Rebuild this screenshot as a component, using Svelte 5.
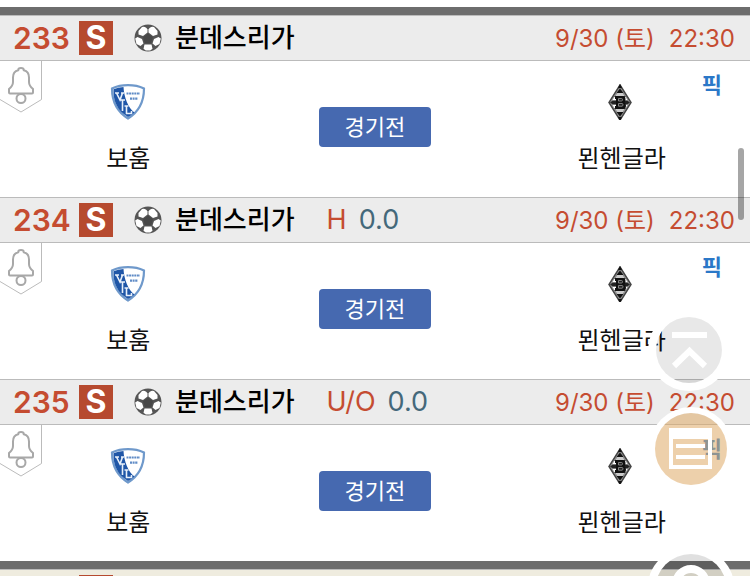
<script>
    let groups = [
        {
            tinted: false,
            games: [
                { no: 233, kind: "S", league: "분데스리가", type: "", line: "" },
                { no: 234, kind: "S", league: "분데스리가", type: "H", line: "0.0" },
                { no: 235, kind: "S", league: "분데스리가", type: "U/O", line: "0.0" }
            ]
        },
        {
            tinted: true,
            games: [{}]
        }
    ];

    function goTop() {
        window.scrollTo({ top: 0, behavior: "smooth" });
    }
</script>

<main>
    {#each groups as group}
        <section class:tinted={group.tinted}>
            {#each group.games as game}
                <article>
                    <header>
                        <span class="no">{game.no ?? ""}</span>
                        <span class="kind">{game.kind ?? ""}</span>
                        {#if game.league}
                            <svg class="ball" viewBox="0 0 28 28" aria-hidden="true">
                                <circle cx="14" cy="14" r="13.5" fill="#555" />
                                <g fill="#fff">
                                    <path d="M4.500 7 8 3q2-1 4.500 1l1 1.500v3L9 12l-4.500-1.500z" />
                                    <path d="M23.500 7 20 3q-2-1-4.500 1l-1 1.500v3L19 12l4.500-1.500z" />
                                    <path d="M1.200 14.500 3.500 13l4.500 2 1.500 4.500-3 2.500-4-2z" />
                                    <path d="M26.800 14.500 24.500 13l-4.500 2-1.500 4.500 3 2.500 4-2z" />
                                    <path d="M10.500 20.500h7l1 4.200-2.300 1.800h-4.400l-2.300-1.800z" />
                                </g>
                                <path d="M14 9.500l5 3.700-1.900 6h-6.200L9 13.200z" fill="#484848" />
                            </svg>
                            <h2>{game.league}</h2>
                            {#if game.type}
                                <span class="type">{game.type}</span>
                                <span class="line">{game.line}</span>
                            {/if}
                            <time><span>9/30 (토)</span><span>22:30</span></time>
                        {/if}
                    </header>

                    {#if game.league}
                        <div class="match">
                            <button class="alarm" aria-label="알림">
                                <svg viewBox="0 0 42 52" fill="none" stroke="#a8a8a8">
                                    <path d="M41.500 0v38.500L21 51 0 38.500" stroke="#bbb" />
                                    <path
                                        d="M9 31.500v-3.500c2.500-2 4-3.500 4-7v-4.500c0-4 2.200-6.500 5.200-7.200 0-1.600 1-2.300 2.800-2.300s2.800.7 2.800 2.300c3 .7 5.200 3.200 5.200 7.200v4.500c0 3.500 1.500 5 4 7v3.500q0 1-1 1H10q-1 0-1-1z"
                                        stroke-width="2"
                                    />
                                    <circle cx="21" cy="37.500" r="4.500" stroke-width="2" />
                                </svg>
                            </button>

                            <div class="team">
                                <svg class="crest" viewBox="0 0 36 36" aria-hidden="true">
                                    <path d="M2 4.500Q9 1.200 18 1.200T34 4.500C34 18 28.500 28 18 34.500 7.500 28 2 18 2 4.500z" fill="#fff" stroke="#6f99cb" stroke-width="2.200" />
                                    <path d="M3.500 5.300Q8 3.500 13.500 3C14 13 18 24 24.500 28.500q-3 3-6.500 4.500C8 27 3 18 3.500 5.300z" fill="#1f56a7" />
                                    <path d="M5 9h4M11 9h3M6.500 9l3.500 7 2.500-7M10 16h5M12.500 16v11M14.500 22h4M16.500 22v7.500h5v-2.500" fill="none" stroke="#e8f0fa" stroke-width="1.600" />
                                    <path d="M16.500 9.500h13.500M20 14.700h8" stroke="#5f8bc6" stroke-width="2.200" stroke-dasharray="2 .6" />
                                </svg>
                                <span>보훔</span>
                            </div>

                            <div class="state"><button class="before">경기전</button></div>

                            <div class="team">
                                <svg class="crest" viewBox="0 0 36 36" aria-hidden="true">
                                    <path d="M16 1 27 18.500 16 36 5 18.500z" fill="#aaa" stroke="#444" stroke-width="1.500" />
                                    <path d="M16 4 25 18.500 16 33 7 18.500z" fill="#ccc" stroke="#777" stroke-width=".8" />
                                    <path d="M16 0 18 4h-4zM16 37 18 33h-4zM16 4.500 19.500 9h-7zM16 32.500 19.500 28h-7z" fill="#111" />
                                    <path d="M11 12h10l2.500 4h-15zM11 25h10l2.500-4h-15z" fill="#fff" />
                                    <path d="M10.500 12.500h11M10.500 24.500h11" stroke="#333" />
                                    <path d="M6 18.500l3-2h14l3 2-3 2H9z" fill="#222" />
                                    <path d="M11 12h7.500q3 0 3 3.200 0 2.300-1.200 3.300 1.700 1 1.700 3.300 0 3.200-3.500 3.200H11v-3h1v-7h-1z" fill="#111" />
                                    <path d="M14.500 14.500h3q1 0 1 1.200t-1 1.300h-3zM14.500 19.500h3.500q1 0 1 1.300T18 22.200h-3.500z" fill="#222" stroke="#999" stroke-width=".8" />
                                </svg>
                                <span>묀헨글라</span>
                            </div>

                            <a class="pick" href="#pick">픽</a>
                        </div>
                    {/if}
                </article>
            {/each}
        </section>
    {/each}
</main>

<nav>
    <button class="round top" aria-label="맨 위로" on:click={goTop}>
        <svg viewBox="0 0 66 66" fill="none" stroke="#fff" stroke-width="6">
            <path d="M16 18h35M18 49l15.500-15L49 49" />
        </svg>
    </button>
    <button class="round slip" aria-label="목록">
        <svg viewBox="0 0 72 72" fill="#fff">
            <path d="M14 15h43v41H14zM18 26v26h35V26z" fill-rule="evenodd" />
            <path d="M21 31h29v4H21zM21 42h29v4H21z" />
        </svg>
    </button>
    <button class="round find" aria-label="검색">
        <svg viewBox="0 0 72 72" fill="none" stroke="#fff" stroke-width="8">
            <circle cx="36" cy="30" r="15" />
            <path d="M47 41l12 12" />
        </svg>
    </button>
</nav>

<div class="thumb"></div>

<style>
    :global(body) {
        background: #fff;
        overflow: hidden;
    }

    main {
        height: 100vh;
        overflow: hidden;
        padding-top: 7px;
        box-sizing: border-box;
        color: #111;
        font-family: Inter, "Noto Sans CJK KR", sans-serif;
    }

    section {
        border-top: 8px solid #6d6d6d;
    }

    header {
        display: flex;
        align-items: center;
        height: 46px;
        box-sizing: border-box;
        padding: 0 15px 0 13px;
        border-top: 1px solid #bbb;
        border-bottom: 1px solid #bbb;
        background: #ececec;
        line-height: 34px;
        white-space: nowrap;
    }

    .tinted header {
        background: #efecdf;
    }

    .no {
        width: 66px;
        color: #c54c31;
        font-size: 30px;
        font-weight: 600;
    }

    .kind {
        width: 34px;
        height: 34px;
        background: #b64a2f;
        color: #fff;
        font-size: 32px;
        font-weight: 700;
        text-align: center;
    }

    .ball {
        width: 28px;
        height: 28px;
        margin: 0 13px 0 21px;
    }

    h2 {
        margin: 0 32px 0 0;
        color: #000;
        font-size: 26px;
        font-weight: 500;
    }

    .type {
        margin-right: 12px;
        color: #c54c31;
        font-size: 27px;
    }

    .line {
        color: #44687a;
        font-size: 27px;
    }

    time {
        display: flex;
        gap: 14px;
        margin-left: auto;
        padding-top: 2px;
        color: #c54c31;
        font-size: 24px;
    }

    .match {
        position: relative;
        display: grid;
        grid-template-columns: 1fr 1fr 1fr;
        height: 136px;
        padding: 0 5px;
        box-sizing: border-box;
    }

    .team {
        display: flex;
        flex-direction: column;
        align-items: center;
        gap: 21px;
        padding-top: 23px;
        font-size: 24px;
        line-height: 36px;
    }

    .crest {
        width: 36px;
        height: 36px;
    }

    .state {
        padding-top: 46px;
        text-align: center;
    }

    button {
        padding: 0;
        border: 0;
        background: none;
        font-family: inherit;
        cursor: pointer;
    }

    .before {
        width: 112px;
        height: 40px;
        border-radius: 4px;
        background: #4669b0;
        color: #fff;
        font-size: 22px;
        line-height: 40px;
    }

    .alarm {
        position: absolute;
        top: 0;
        left: 0;
        width: 42px;
        height: 52px;
    }

    .pick {
        position: absolute;
        top: 8px;
        right: 28px;
        color: #2b78c8;
        font-size: 22px;
        font-weight: 700;
        line-height: 32px;
        text-decoration: none;
    }

    svg {
        display: block;
    }

    /* floating buttons */
    .round {
        position: fixed;
        right: 23px;
        width: 72px;
        height: 72px;
        border-radius: 50%;
    }

    .top {
        top: 317px;
        right: 28px;
        width: 66px;
        height: 66px;
        background: rgba(0, 0, 0, 0.09);
        box-shadow: 0 0 0 8px #fff;
    }

    .slip {
        top: 413px;
        background: rgba(223, 169, 102, 0.55);
        box-shadow: 0 0 0 6px #fff;
    }

    .find {
        top: 554px;
        background: rgba(0, 0, 0, 0.12);
        box-shadow: 0 0 0 8px #fff;
    }

    .thumb {
        position: fixed;
        top: 148px;
        right: 6px;
        width: 6px;
        height: 72px;
        border-radius: 3px;
        background: rgba(0, 0, 0, 0.35);
    }
</style>
